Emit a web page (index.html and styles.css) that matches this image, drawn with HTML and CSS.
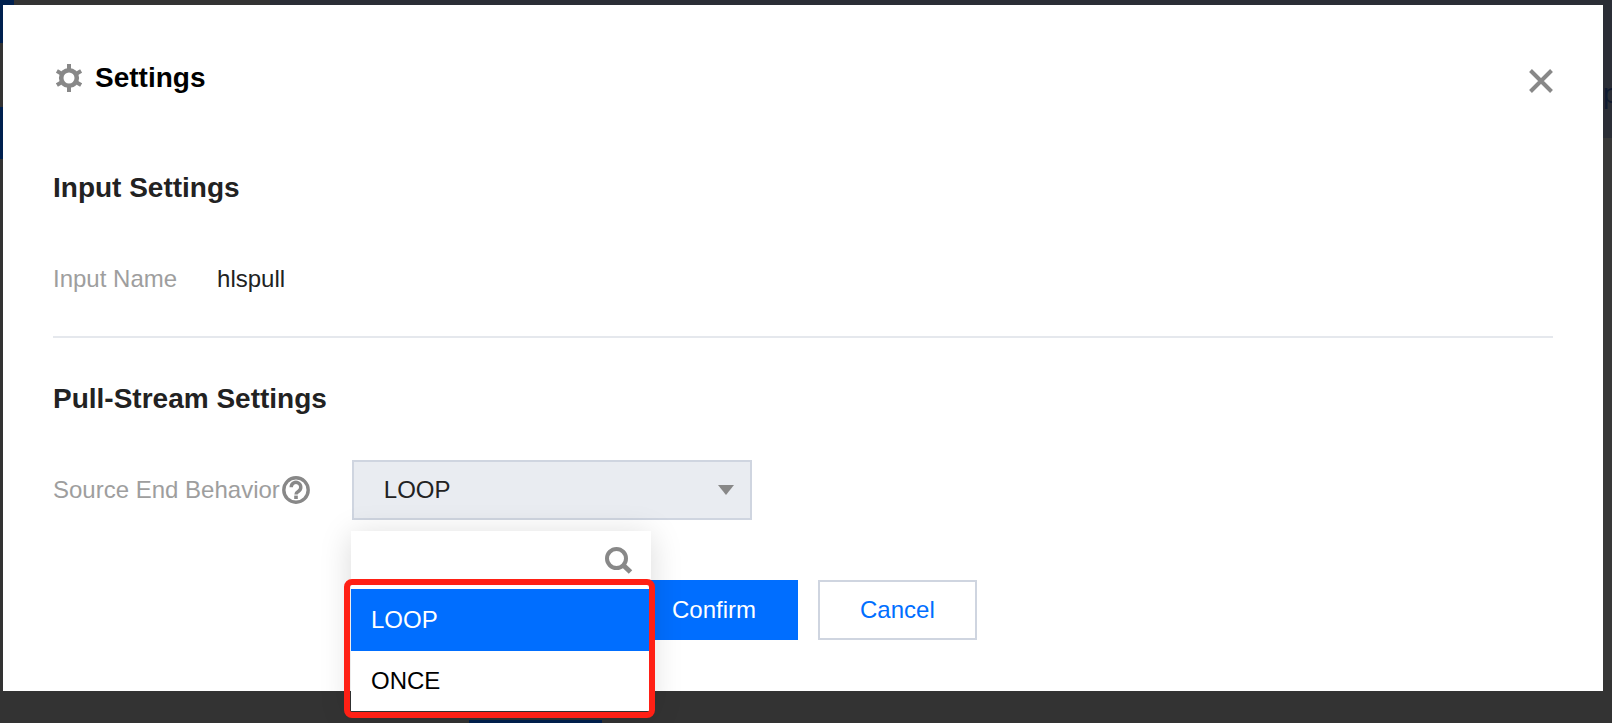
FILE: index.html
```html
<!DOCTYPE html>
<html lang="en">
<head>
    <meta charset="UTF-8">
    <title>Settings</title>
    <link rel="stylesheet" href="styles.css">
</head>
<body>
    <div class="backdrop-patch patch-corner"></div>
    <div class="backdrop-patch patch-strip"></div>
    <div class="backdrop-patch patch-left"></div>
    <div class="backdrop-patch patch-bottom"></div>
    <div class="backdrop-patch patch-top"></div>
    <div class="backdrop-patch patch-right"></div>
    <div class="backdrop-patch patch-right-low"></div>
    <span class="backdrop-letter">p</span>

    <div class="dialog">
        <div class="dialog-head">
            <svg class="gear" viewBox="0 0 26 28" aria-hidden="true">
                <g fill="#888">
                    <rect x="11" y="0" width="4" height="28"/>
                    <rect x="11" y="0" width="4" height="28" transform="rotate(60 13 14)"/>
                    <rect x="11" y="0" width="4" height="28" transform="rotate(120 13 14)"/>
                </g>
                <circle cx="13" cy="14" r="7.8" fill="#fff" stroke="#888" stroke-width="4.6"/>
            </svg>
            <h2 class="dialog-title">Settings</h2>
            <svg class="close" viewBox="0 0 24 24" aria-hidden="true">
                <path d="M1.5 1.5L22.5 22.5M22.5 1.5L1.5 22.5" stroke="#888" stroke-width="4" fill="none"/>
            </svg>
        </div>

        <h3 class="section-title first">Input Settings</h3>
        <div class="row">
            <span class="label">Input Name</span>
            <span class="value">hlspull</span>
        </div>
        <hr class="divider">

        <h3 class="section-title">Pull-Stream Settings</h3>
        <div class="field">
            <span class="label">Source End Behavior</span>
            <svg class="help" viewBox="0 0 28 28" aria-hidden="true">
                <circle cx="14" cy="14" r="12.2" fill="none" stroke="#888" stroke-width="3.4"/>
                <path d="M9.2 11.2a4.8 4.8 0 1 1 7.4 4c-1.6 1-2.6 1.6-2.6 3.2" fill="none" stroke="#888" stroke-width="3.4"/>
                <rect x="12.2" y="19.6" width="3.6" height="3.4" fill="#888"/>
            </svg>
            <div class="select">
                <span>LOOP</span>
                <i class="arrow"></i>
            </div>
        </div>

        <div class="actions">
            <button class="btn btn-primary">Confirm</button>
            <button class="btn">Cancel</button>
        </div>
    </div>

    <div class="dropdown">
        <div class="search">
            <svg class="search-icon" viewBox="0 0 28 27" aria-hidden="true">
                <circle cx="11.5" cy="11.5" r="9.5" fill="none" stroke="#888" stroke-width="4"/>
                <path d="M17.5 17.5L25.5 25" stroke="#888" stroke-width="5" fill="none"/>
            </svg>
        </div>
        <div class="option selected">LOOP</div>
        <div class="option">ONCE</div>
    </div>
    <div class="highlight"></div>
</body>
</html>
```

FILE: styles.css
```css
body {
    box-sizing: border-box;
    margin: 0;
    height: 723px;
    padding-top: 5px;
    overflow: hidden;
    position: relative;
    background-color: #333;
    font-family: 'Liberation Sans', Arial, sans-serif;
    font-size: 24px;
    color: #222;
}

.backdrop-patch {
    position: absolute;
    background-color: #00204f;
}

.patch-corner {
    left: 0;
    top: 0;
    width: 3px;
    height: 43px;
}

.patch-strip {
    left: 0;
    top: 0;
    width: 14px;
    height: 5px;
}

.patch-left {
    left: 0;
    top: 107px;
    width: 3px;
    height: 52px;
}

.patch-bottom {
    left: 469px;
    top: 720px;
    width: 133px;
    height: 3px;
}

.patch-top {
    left: 270px;
    top: 0;
    right: 0;
    height: 5px;
    background-color: #2b2e36;
}

.patch-right {
    left: 1603px;
    top: 0;
    right: 0;
    height: 138px;
    background-color: #2b2e36;
}

.patch-right-low {
    left: 1603px;
    top: 138px;
    right: 0;
    height: 542px;
    background-color: #383838;
}

.backdrop-letter {
    position: absolute;
    left: 1603px;
    top: 78px;
    font-size: 28px;
    color: #101a30;
}

.dialog {
    position: relative;
    box-sizing: border-box;
    width: 1600px;
    height: 686px;
    margin-left: 3px;
    padding: 0 50px;
    background-color: #fff;
}

.dialog-head {
    display: flex;
    align-items: center;
    height: 60px;
    padding-top: 43px;
}

.gear {
    width: 26px;
    height: 28px;
    margin: 0 13px 0 3px;
}

.dialog-title {
    margin: 0;
    font-size: 28px;
    color: #000;
}

.close {
    width: 24px;
    height: 24px;
    margin-left: auto;
    margin-top: 6px;
}

.section-title {
    margin: 0;
    font-size: 28px;
    line-height: 40px;
    color: #222;
}

.section-title.first {
    margin-top: 60px;
}

.row {
    display: flex;
    margin-top: 55px;
    line-height: 32px;
}

.label {
    color: #9e9e9e;
}

.value {
    margin-left: 40px;
}

.divider {
    margin: 41px 0 0;
    border: 0;
    border-top: 2px solid #e5e8ed;
}

.divider + .section-title {
    margin-top: 41px;
}

.field {
    display: flex;
    align-items: center;
    margin-top: 41px;
}

.help {
    width: 28px;
    height: 28px;
    margin-left: 2px;
}

.select {
    box-sizing: border-box;
    display: flex;
    align-items: center;
    justify-content: space-between;
    width: 400px;
    height: 60px;
    margin-left: 42px;
    padding: 0 16px 0 30px;
    background-color: #e9ecf1;
    border: 2px solid #cfd5e0;
}

.arrow {
    width: 0;
    height: 0;
    border-left: 8px solid transparent;
    border-right: 8px solid transparent;
    border-top: 10px solid #888;
}

.actions {
    display: flex;
    gap: 20px;
    margin: 60px 0 0 577px;
}

.btn {
    box-sizing: border-box;
    height: 60px;
    padding: 0 40px;
    font-family: inherit;
    font-size: 24px;
    color: #006eff;
    background-color: #fff;
    border: 2px solid #cfd5e0;
}

.btn-primary {
    color: #fff;
    background-color: #006eff;
    border-color: #006eff;
}

/* the list runs past the dialog, so it sits on top of everything */
.dropdown {
    position: absolute;
    left: 351px;
    top: 531px;
    width: 300px;
    background-color: #fff;
    box-shadow: 0 4px 30px rgba(0, 0, 0, 0.15);
}

.search {
    display: flex;
    justify-content: flex-end;
    align-items: center;
    height: 58px;
    padding-right: 18px;
}

.search-icon {
    width: 28px;
    height: 27px;
}

.option {
    height: 60px;
    padding-left: 20px;
    line-height: 60px;
    color: #000;
}

.option.selected {
    height: 62px;
    line-height: 62px;
    color: #fff;
    background-color: #006eff;
}

.highlight {
    position: absolute;
    left: 344px;
    top: 579px;
    box-sizing: border-box;
    width: 311px;
    height: 139px;
    border: 6px solid #ff2015;
    border-radius: 8px;
}
```
